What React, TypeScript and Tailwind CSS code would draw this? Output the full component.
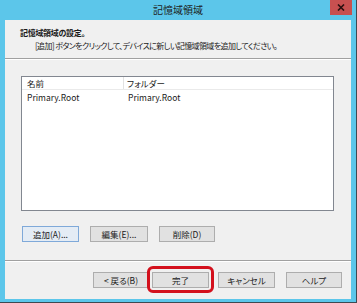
import React from "react";

const Btn = ({ label, w, blue }: { label: string; w: string; blue?: boolean }) => (
  <div
    className={`${w} h-[16px] flex items-center justify-center border text-[8.5px] leading-none text-[#1a1a1a] ${
      blue ? "bg-[#e4ecf5] border-[#7fa9d9]" : "bg-[#e1e1e1] border-[#adadad]"
    }`}
  >
    {label}
  </div>
);

export default function App() {
  return (
    <div
      className="w-[357px] h-[303px] bg-[#5cc6ea] border-r border-b border-[#3d4a52] flex flex-col [font-feature-settings:'palt']"
      style={{ fontFamily: '"Noto Sans CJK JP", "Noto Sans", sans-serif' }}
    >
      <div className="h-[20px] grid grid-cols-[1fr_auto_1fr] items-start">
        <div />
        <div className="text-[10px] leading-none pt-[5px] text-[#1e1e1e]">記憶域領域</div>
        <div className="flex justify-end pr-[4px]">
          <div className="w-[22px] h-[15px] bg-[#c75050] flex items-center justify-center">
            <svg width="8" height="7" viewBox="0 0 8 7">
              <path d="M1 0.5 L7 6.5 M7 0.5 L1 6.5" stroke="#2a1010" strokeWidth="1.6" />
            </svg>
          </div>
        </div>
      </div>
      <div className="flex-1 ml-[5px] mr-[5px] mb-[3px] bg-[#f0f0f0] flex flex-col">
        <div className="h-[38px] flex flex-col pl-[15px] pt-[8px] text-[#1a1a1a]">
          <div className="text-[8px] leading-[10px] font-bold tracking-[-0.3px]">記憶域領域の設定。</div>
          <div className="text-[8px] leading-[10px] mt-[3px] pl-[15px] tracking-[-0.6px]">
            [追加] ボタンをクリックして、デバイスに新しい記憶域領域を追加してください。
          </div>
        </div>
        <div className="h-px bg-[#a0a0a0]" />
        <div className="h-px bg-white" />
        <div className="pl-[16px] pt-[16px]">
          <div className="w-[313px] h-[135px] bg-white border border-[#828790] flex flex-col text-[8.5px] text-[#1a1a1a]">
            <div className="h-[13px] flex border-b border-[#eaeaea]">
              <div className="w-[102px] border-r border-[#e2e2e2] pl-[5px] leading-[13px]">名前</div>
              <div className="pl-[3px] leading-[13px]">フォルダー</div>
            </div>
            <div className="h-[14px] flex">
              <div className="w-[102px] pl-[5px] leading-[14px]">Primary.Root</div>
              <div className="pl-[4px] leading-[14px]">Primary.Root</div>
            </div>
          </div>
          <div className="mt-[15px] ml-[1px] flex gap-[11px]">
            <Btn label="追加(A)..." w="w-[57px]" blue />
            <Btn label="編集(E)..." w="w-[58px]" />
            <Btn label="削除(D)" w="w-[56px]" />
          </div>
        </div>
        <div className="mt-[18px] h-px bg-[#a0a0a0]" />
        <div className="h-px bg-white" />
        <div className="mt-[10px] flex justify-end pr-[9px]">
          <Btn label="< 戻る(B)" w="w-[56px]" />
          <div className="relative ml-[3px]">
            <Btn label="完了" w="w-[57px]" />
            <div className="absolute -left-[5px] -right-[5px] -top-[6px] -bottom-[5px] border-[3px] border-[#d3101c] rounded-[6px]" />
          </div>
          <div className="ml-[9px]">
            <Btn label="キャンセル" w="w-[57px]" />
          </div>
          <div className="ml-[11px]">
            <Btn label="ヘルプ" w="w-[56px]" />
          </div>
        </div>
      </div>
    </div>
  );
}
